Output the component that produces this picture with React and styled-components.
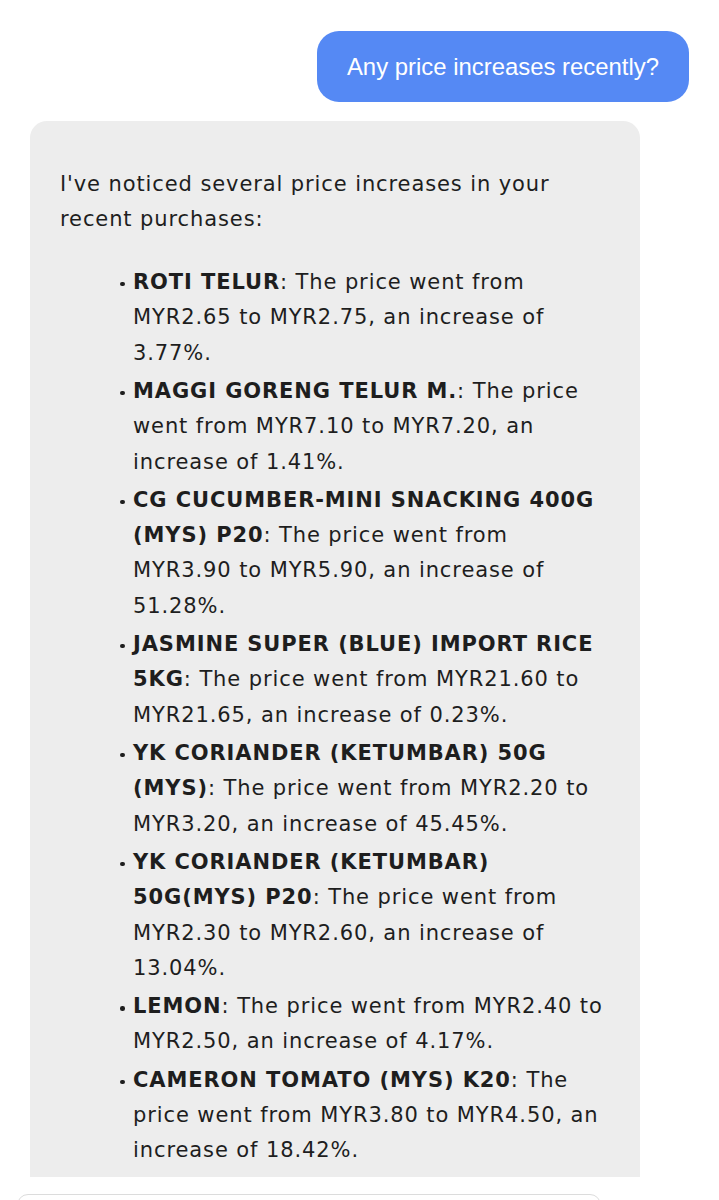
import React from "react";
import styled, { createGlobalStyle } from "styled-components";

const Global = createGlobalStyle`
  html, body { margin: 0; padding: 0; background: #ffffff; }
  body { font-family: "DejaVu Sans", "Liberation Sans", sans-serif; -webkit-font-smoothing: antialiased; }
  #root { height: 1200px; overflow: hidden; }
`;

const Page = styled.div`
  height: 1200px;
  display: flex;
  flex-direction: column;
  overflow: hidden;
`;

const UserRow = styled.div`
  display: flex;
  justify-content: flex-end;
  padding: 31px 30px 0 30px;
`;

const UserBubble = styled.div`
  background: #5589f4;
  color: #ffffff;
  border-radius: 22px;
  padding: 0 30px;
  height: 71px;
  display: flex;
  align-items: center;
  font-family: "Liberation Sans", Arial, sans-serif;
  font-size: 23.9px;
`;

const AssistantPanel = styled.div`
  margin: 19px 79px 0 30px;
  height: 1056px;
  flex: none;
  overflow: hidden;
  background: #ededed;
  border-radius: 17px 17px 0 0;
  padding: 46px 30px 0 30px;
  box-sizing: border-box;
  color: #1e1e1e;
  font-size: 21px;
  letter-spacing: 0.9px;
  line-height: 35.4px;
`;

const Paragraph = styled.p`
  margin: 0 0 27px 0;
`;

const List = styled.ul`
  list-style: none;
  margin: 0;
  padding: 0 0 0 60px;
  display: flex;
  flex-direction: column;
  gap: 2.7px;
`;

const Item = styled.li`
  display: flex;
`;

const Marker = styled.span`
  flex: none;
  width: 13px;
  height: 35.4px;
  display: flex;
  align-items: center;
  padding-top: 3px;
  box-sizing: border-box;

  &::before {
    content: "";
    width: 4.5px;
    height: 4.5px;
    border-radius: 50%;
    background: #1e1e1e;
  }
`;

const ItemText = styled.span`
  flex: 1;
`;

const Name = styled.strong`
  font-weight: 700;
`;

const Composer = styled.div`
  margin: 17px 118px 0 17px;
  height: 60px;
  border: 1.5px solid #dcdcdc;
  border-radius: 11px;
  flex: none;
`;

const items = [
  ["ROTI TELUR", "The price went from MYR2.65 to MYR2.75, an increase of 3.77%."],
  ["MAGGI GORENG TELUR M.", "The price went from MYR7.10 to MYR7.20, an increase of 1.41%."],
  ["CG CUCUMBER-MINI SNACKING 400G (MYS) P20", "The price went from MYR3.90 to MYR5.90, an increase of 51.28%."],
  ["JASMINE SUPER (BLUE) IMPORT RICE 5KG", "The price went from MYR21.60 to MYR21.65, an increase of 0.23%."],
  ["YK CORIANDER (KETUMBAR) 50G (MYS)", "The price went from MYR2.20 to MYR3.20, an increase of 45.45%."],
  ["YK CORIANDER (KETUMBAR) 50G(MYS) P20", "The price went from MYR2.30 to MYR2.60, an increase of 13.04%."],
  ["LEMON", "The price went from MYR2.40 to MYR2.50, an increase of 4.17%."],
  ["CAMERON TOMATO (MYS) K20", "The price went from MYR3.80 to MYR4.50, an increase of 18.42%."],
];

export default function App() {
  return (
    <Page>
      <Global />
      <UserRow>
        <UserBubble>Any price increases recently?</UserBubble>
      </UserRow>
      <AssistantPanel>
        <Paragraph>I've noticed several price increases in your recent purchases:</Paragraph>
        <List>
          {items.map(([name, text]) => (
            <Item key={name}>
              <Marker />
              <ItemText>
                <Name>{name}</Name>: {text}
              </ItemText>
            </Item>
          ))}
        </List>
      </AssistantPanel>
      <Composer />
    </Page>
  );
}
